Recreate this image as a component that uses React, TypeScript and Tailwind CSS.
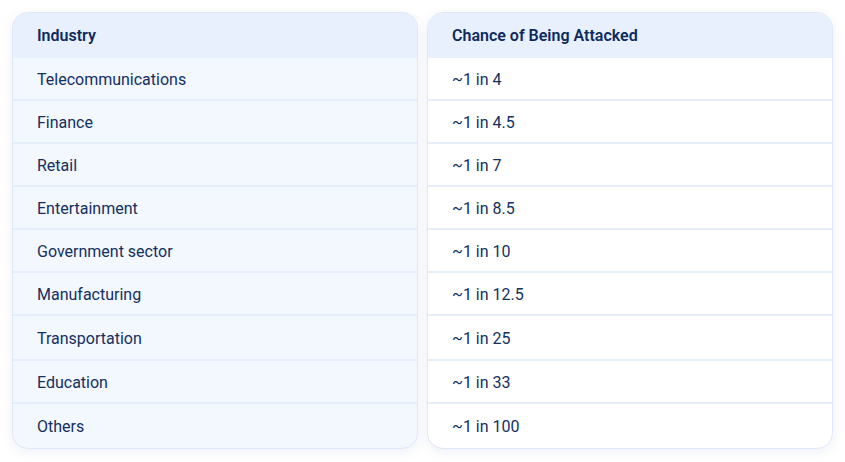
const rows = [
  ['Telecommunications', '~1 in 4'],
  ['Finance', '~1 in 4.5'],
  ['Retail', '~1 in 7'],
  ['Entertainment', '~1 in 8.5'],
  ['Government sector', '~1 in 10'],
  ['Manufacturing', '~1 in 12.5'],
  ['Transportation', '~1 in 25'],
  ['Education', '~1 in 33'],
  ['Others', '~1 in 100'],
]

function Column({ title, values, body }: { title: string; values: string[]; body: string }) {
  return (
    <div className={`flex-1 rounded-2xl border border-[#dfe8fb] overflow-hidden shadow-[0_3px_12px_rgba(30,60,140,0.08)] ${body}`}>
      <div className="h-[45px] flex items-center px-6 pt-[1px] bg-[#e8f0fe] text-[16px] font-semibold text-[#0e2a5c]">
        {title}
      </div>
      {values.map((v, i) => (
        <div
          key={v}
          className={`flex items-center px-6 pt-[2px] text-[16px] text-[#14305f] ${
            i === values.length - 1 ? 'h-[44px]' : i === 6 ? 'h-[45px] border-b-2 border-[#e6eefc]' : 'h-[43px] border-b-2 border-[#e6eefc]'
          }`}
        >
          {v}
        </div>
      ))}
    </div>
  )
}

export default function App() {
  return (
    <div className="w-[845px] h-[462px] bg-white px-3 pt-3 flex items-start gap-[9px] font-['Roboto',sans-serif]">
      <Column title="Industry" values={rows.map((r) => r[0])} body="bg-[#f3f7fe]" />
      <Column title="Chance of Being Attacked" values={rows.map((r) => r[1])} body="bg-white" />
    </div>
  )
}
